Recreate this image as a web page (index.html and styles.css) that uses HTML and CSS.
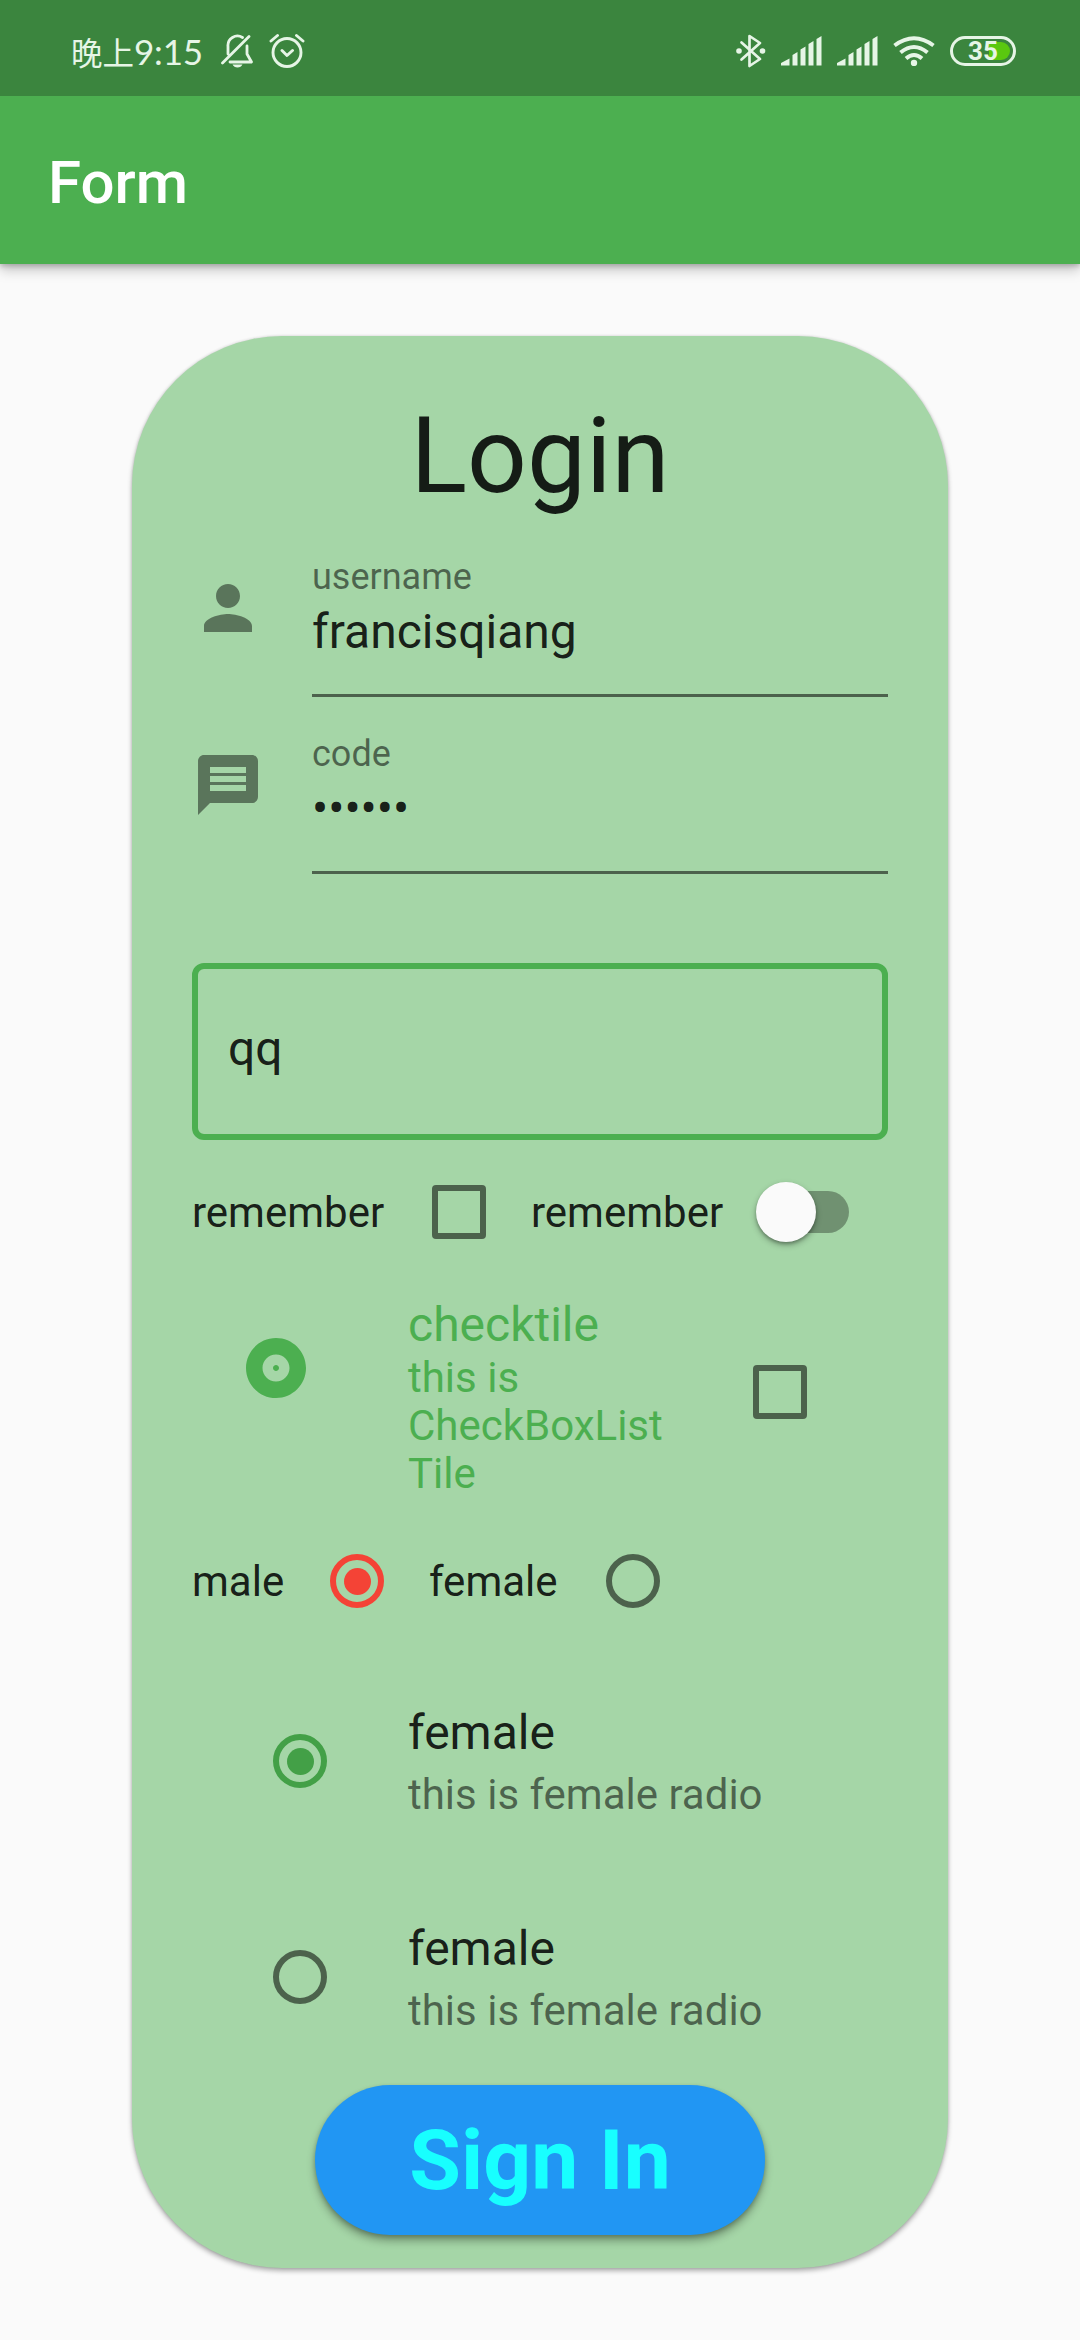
FILE: index.html
```html
<!DOCTYPE html>
<html lang="en">
<head>
<meta charset="utf-8">
<title>Form</title>
<link rel="stylesheet" href="styles.css">
</head>
<body>
<header class="header">
  <div class="status">
    <div class="status-left">
      <span class="clock"><span class="period">晚上</span>9:15</span>
      <svg class="bell" width="32" height="34" viewBox="0 0 32 34" fill="none" stroke="#e6f5e6" stroke-width="2.8" stroke-linecap="round" stroke-linejoin="round">
        <path d="M7 20V12.500A9.500 9.500 0 0 1 21.500 3.500M1.500 29L28 2.500M26 12V20L30.500 28H9"/>
        <path d="M11.500 30.500H21.500Q20 33.500 16.500 33.500T11.500 30.500Z" fill="#e6f5e6" stroke="none"/>
      </svg>
      <svg class="alarm" width="36" height="36" viewBox="0 0 36 36" fill="none" stroke="#e6f5e6" stroke-width="2.900" stroke-linecap="round" stroke-linejoin="round">
        <circle cx="18" cy="19.500" r="14"/><path d="M2 8L8.500 2.500M27.500 2.500L34 8M13 17.500L18 22.500L23.500 17.500"/>
      </svg>
    </div>
    <div class="status-right">
      <svg class="bt" width="30" height="36" viewBox="0 0 30 36" fill="none" stroke="#e6f5e6" stroke-width="2.700" stroke-linejoin="round" stroke-linecap="round">
        <path d="M5.500 9.500L24 26L13.500 33V3L24 10L5.500 26.500"/><circle cx="3" cy="18" r="2.800" fill="#e6f5e6" stroke="none"/><circle cx="26.500" cy="18" r="2.800" fill="#e6f5e6" stroke="none"/>
      </svg>
      <svg class="signal" width="42" height="30" viewBox="0 0 42 30" fill="#e6f5e6"><path d="M0 29.500V27L8.500 22.500V29.500ZM11.500 19L16.500 16V29.500H11.500ZM19.500 13.500L24.500 10.500V29.500H19.500ZM27.500 8L32.500 5V29.500H27.500ZM35.500 3L40.500 0V29.500H35.500Z"/></svg>
      <svg class="signal" width="42" height="30" viewBox="0 0 42 30" fill="#e6f5e6"><path d="M0 29.500V27L8.500 22.500V29.500ZM11.500 19L16.500 16V29.500H11.500ZM19.500 13.500L24.500 10.500V29.500H19.500ZM27.500 8L32.500 5V29.500H27.500ZM35.500 3L40.500 0V29.500H35.500Z"/></svg>
      <svg class="wifi" width="42" height="30" viewBox="0 0 42 30" fill="none" stroke="#e6f5e6" stroke-width="4">
        <path d="M1.500 9.500Q21 -5 40.500 9.500M7.500 16.500Q21 5.500 34.500 16.500M13 22.500Q21 15.500 29 22.500"/><circle cx="21" cy="27" r="3.200" fill="#e6f5e6" stroke="none"/>
      </svg>
      <div class="battery"><span class="charge"></span><span class="percent">35</span></div>
    </div>
  </div>
  <h1 class="title">Form</h1>
</header>
<main class="page">
  <form class="card">
    <h2 class="heading">Login</h2>
    <div class="field">
      <svg class="icon" viewBox="0 0 24 24"><path d="M12 12c2.210 0 4-1.790 4-4s-1.790-4-4-4-4 1.790-4 4 1.790 4 4 4zm0 2c-2.670 0-8 1.340-8 4v2h16v-2c0-2.660-5.330-4-8-4z"/></svg>
      <div class="entry"><span class="label">username</span><span class="value">francisqiang</span></div>
    </div>
    <div class="field">
      <svg class="icon" viewBox="0 0 24 24"><path d="M20 2H4c-1.100 0-1.990.9-1.990 2L2 22l4-4h14c1.100 0 2-.9 2-2V4c0-1.100-.9-2-2-2zM6 9h12v2H6V9zm12 5H6v-2h12v2zm0-6H6V6h12v2z"/></svg>
      <div class="entry"><span class="label">code</span><span class="value">••••••</span></div>
    </div>
    <div class="outlined">qq</div>
    <div class="row">
      <span class="text remember">remember</span><span class="slot"><i class="checkbox"></i></span>
      <span class="text remember">remember</span><span class="switch"><i class="thumb"></i></span>
    </div>
    <div class="tile check-tile">
      <svg class="album" viewBox="0 0 24 24"><path d="M12 2C6.480 2 2 6.480 2 12s4.480 10 10 10 10-4.480 10-10S17.520 2 12 2zm0 14.500c-2.490 0-4.500-2.010-4.500-4.500S9.510 7.500 12 7.500s4.500 2.010 4.500 4.500-2.010 4.500-4.500 4.500zm0-5.500c-.55 0-1 .45-1 1s.45 1 1 1 1-.45 1-1-.45-1-1-1z"/></svg>
      <div class="tile-text"><span class="tile-title">checktile</span><span class="tile-sub">this is<br>CheckBoxList<br>Tile</span></div>
      <i class="checkbox"></i>
    </div>
    <div class="row radios">
      <span class="text male">male</span><span class="slot"><i class="radio on red"></i></span>
      <span class="text female">female</span><span class="slot"><i class="radio"></i></span>
    </div>
    <div class="tile radio-tile">
      <span class="slot"><i class="radio on green"></i></span>
      <div class="tile-text"><span class="tile-title">female</span><span class="tile-sub">this is female radio</span></div>
    </div>
    <div class="tile radio-tile">
      <span class="slot"><i class="radio"></i></span>
      <div class="tile-text"><span class="tile-title">female</span><span class="tile-sub">this is female radio</span></div>
    </div>
    <button class="submit" type="button">Sign In</button>
  </form>
</main>
</body>
</html>
```

FILE: styles.css
```css
* { box-sizing: border-box; }
body { margin: 0; width: 1080px; height: 2340px; overflow: hidden; background: #fafafa; font-family: Roboto, "Noto Sans CJK SC", sans-serif; color: rgba(0, 0, 0, .87); }
svg { display: block; flex: none; }

.header { height: 264px; background: #4caf50; box-shadow: 0 6px 12px rgba(0, 0, 0, .22), 0 2px 5px rgba(0, 0, 0, .2); }
.status { height: 96px; background: #3b853e; color: #e6f5e6; display: flex; justify-content: space-between; padding: 0 64px 0 71px; }
.status-left, .status-right { display: flex; align-items: flex-start; }
.clock { font: 35px/44px Lato, "Noto Sans CJK SC", sans-serif; margin-top: 29px; width: 133px; white-space: nowrap; letter-spacing: -.2px; }
.period { font-size: 31.5px; letter-spacing: 0; }
.bell { margin: 34px 0 0 17px; }
.alarm { margin: 33px 0 0 16px; }
.bt { margin: 33px 15px 0 0; }
.signal { margin: 36px 14px 0 0; }
.wifi { margin: 36px 15px 0 0; }
.battery { position: relative; width: 66px; height: 30px; margin-top: 36px; border: 3px solid #e6f5e6; border-radius: 15px; }
.charge { position: absolute; right: 3px; top: 3px; width: 21px; height: 18px; border-radius: 0 9px 9px 0; background: #5ac80f; }
.percent { position: absolute; left: 0; top: 0; width: 60px; text-align: center; font: 700 26px/25px Roboto, sans-serif; }
.title { margin: 0; padding-left: 48px; font-size: 60px; font-weight: 500; line-height: 173px; color: #fff; }

.page { height: 2076px; padding: 72px 132px; }
.card { width: 816px; height: 1932px; padding: 60px 60px 33px; border-radius: 150px; background: #a5d6a7; box-shadow: 0 3px 5px rgba(0, 0, 0, .3), 0 0 3px rgba(0, 0, 0, .14); display: flex; flex-direction: column; }
.card > * { flex: none; }
.heading { margin: 0; height: 123px; font-size: 105px; font-weight: 400; line-height: 122px; text-align: center; }
.field { display: flex; height: 177px; gap: 48px; }
.icon { width: 72px; height: 72px; margin-top: 53px; fill: rgba(0, 0, 0, .45); }
.entry { flex: 1; height: 178px; padding-top: 37px; border-bottom: 3px solid rgba(0, 0, 0, .54); display: flex; flex-direction: column; }
.label { font-size: 36px; line-height: 42px; color: rgba(0, 0, 0, .54); }
.value { font-size: 48px; line-height: 56px; margin-top: 6px; }
.outlined { margin-top: 90px; height: 177px; border: 6px solid #4caf50; border-radius: 12px; padding-left: 30px; font-size: 48px; line-height: 159px; }
.row { display: flex; align-items: center; height: 144px; font-size: 42px; }
.text { flex: none; }
.remember { width: 195px; }
.male { width: 93px; }
.female { width: 132px; }
.slot { width: 144px; display: flex; justify-content: center; flex: none; }
.checkbox { width: 54px; height: 54px; border: 6px solid rgba(0, 0, 0, .54); border-radius: 4px; flex: none; }
.switch { position: relative; width: 84px; height: 42px; margin-left: 39px; border-radius: 21px; background: rgba(0, 0, 0, .32); }
.thumb { position: absolute; left: -9px; top: -9px; width: 60px; height: 60px; border-radius: 50%; background: #fafafa; box-shadow: 0 3px 6px rgba(0, 0, 0, .3), 0 2px 3px rgba(0, 0, 0, .2); }
.tile { display: flex; }
.tile-text { display: flex; flex-direction: column; }
.tile-title { font-size: 48px; line-height: 56px; }
.tile-sub { font-size: 42px; line-height: 48px; }
.check-tile { height: 225px; padding: 12px 0 0 48px; color: #4caf50; }
.album { width: 72px; height: 72px; margin-top: 36px; fill: #4caf50; }
.check-tile .tile-text { margin-left: 96px; width: 345px; padding-top: 1px; }
.check-tile .tile-sub { margin-top: 1px; }
.check-tile .checkbox { margin-top: 69px; }
.radio { display: flex; width: 54px; height: 54px; border: 6px solid rgba(0, 0, 0, .54); border-radius: 50%; align-items: center; justify-content: center; }
.radio.on::before { content: ""; width: 27px; height: 27px; border-radius: 50%; }
.radio.red { border-color: #f44336; }
.radio.red::before { background: #f44336; }
.radio.green { border-color: #43a047; }
.radio.green::before { background: #43a047; }
.radio-tile { height: 216px; padding-left: 36px; align-items: center; }
.radio-tile .tile-text { margin-left: 36px; padding-top: 2px; }
.radio-tile .tile-sub { color: rgba(0, 0, 0, .54); margin-top: 10px; }
.submit { align-self: center; width: 450px; height: 150px; border: 0; border-radius: 75px; padding: 1px 0 0; background: #2196f3; color: #18ffff; font: 700 84px/149px Roboto, sans-serif; box-shadow: 0 6px 9px rgba(0, 0, 0, .3), 0 2px 4px rgba(0, 0, 0, .2); }
```
